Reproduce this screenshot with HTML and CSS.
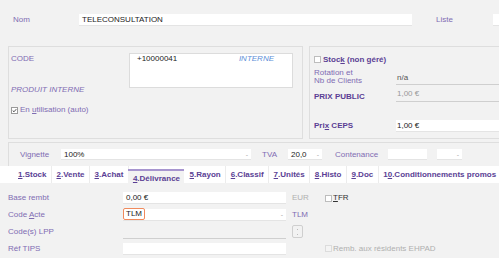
FILE: index.html
```html
<!DOCTYPE html>
<html lang="fr">
<head>
<meta charset="utf-8">
<title>Fiche produit</title>
<link rel="stylesheet" href="styles.css">
</head>
<body>
<div class="page">
  <div class="head-row">
    <span class="lbl nom-lbl">Nom</span>
    <div class="field white nom-input">TELECONSULTATION</div>
    <span class="lbl liste-lbl">Liste</span>
    <div class="field white liste-input"></div>
  </div>

  <div class="panels">
    <div class="panel left-panel">
      <div class="code-row">
        <div class="code-labels">
          <span class="lbl">CODE</span>
          <span class="lbl ital">PRODUIT INTERNE</span>
        </div>
        <div class="code-box">
          <span class="code-val">+10000041</span>
          <span class="interne">INTERNE</span>
        </div>
      </div>
      <div class="check-row">
        <span class="chk checked"><svg width="7" height="7" viewBox="0 0 7 7"><path d="M1 3.6 L2.8 5.3 L6 1.6" fill="none" stroke="#333" stroke-width="1.2"/></svg></span>
        <span class="lbl">En <u>u</u>tilisation (auto)</span>
      </div>
    </div>
    <div class="panel right-panel">
      <div class="check-row stock-row">
        <span class="chk"></span>
        <span class="lbl bold">Stoc<u>k</u> (non géré)</span>
      </div>
      <div class="rp-row rot-row">
        <span class="lbl rp-lbl two">Rotation et<br>Nb de Clients</span>
        <div class="field line na">n/a</div>
      </div>
      <div class="rp-row pp-row">
        <span class="lbl rp-lbl bold pp-lbl">PRIX PUBLIC</span>
        <div class="field line grey">1,00 €</div>
      </div>
      <div class="rp-row ceps-row">
        <span class="lbl rp-lbl bold">Pri<u>x</u> CEPS</span>
        <div class="field white ceps">1,00 €</div>
      </div>
    </div>
  </div>

  <div class="vig-box">
    <span class="lbl vig-lbl">Vi<u>g</u>nette</span>
    <div class="field white vig-input">100%<span class="arr">-</span></div>
    <span class="lbl tva-lbl">TVA</span>
    <div class="field white tva-input">20,0<span class="arr">-</span></div>
    <span class="lbl cont-lbl">Contenance</span>
    <div class="field white cont-input"></div>
    <div class="field white unit-input"><span class="arr">-</span></div>
  </div>

  <div class="tabs">
    <span class="tab"><u>1</u>.Stock</span>
    <span class="tab"><u>2</u>.Vente</span>
    <span class="tab"><u>3</u>.Achat</span>
    <span class="tab active"><u>4</u>.Délivrance</span>
    <span class="tab"><u>5</u>.Rayon</span>
    <span class="tab"><u>6</u>.Classif</span>
    <span class="tab"><u>7</u>.Unités</span>
    <span class="tab"><u>8</u>.Histo</span>
    <span class="tab"><u>9</u>.Doc</span>
    <span class="tab">1<u>0</u>.Conditionnements promos</span>
  </div>

  <div class="content">
    <div class="c-row">
      <span class="lbl c-lbl">Base rembt</span>
      <div class="field white c-input">0,00 €</div>
      <span class="unit grey-txt">EUR</span>
      <span class="check-row c-chk"><span class="chk"></span><span class="lbl dark"><u>T</u>FR</span></span>
    </div>
    <div class="c-row">
      <span class="lbl c-lbl">Code <u>A</u>cte</span>
      <div class="field white c-input"><span class="tlm">TLM</span><span class="arr">-</span></div>
      <span class="unit lbl">TLM</span>
    </div>
    <div class="c-row">
      <span class="lbl c-lbl">Code(s) LPP</span>
      <div class="field line c-input"></div>
      <span class="unit"><span class="mini-btn"><span class="dot"></span><span class="dot"></span></span></span>
    </div>
    <div class="c-row">
      <span class="lbl c-lbl">Réf TIPS</span>
      <div class="field white c-input"></div>
      <span class="unit"></span>
      <span class="check-row c-chk disabled"><span class="chk"></span><span class="lbl grey-txt">Remb. aux résidents EHPAD</span></span>
    </div>
  </div>
</div>
</body>
</html>
```
FILE: styles.css
```css
* { box-sizing: border-box; }
html, body {
  margin: 0;
  padding: 0;
  background: #f2f2f2;
  overflow: hidden;
}
body {
  font-family: "Liberation Sans", Arial, sans-serif;
  font-size: 8px;
  color: #222;
  line-height: 10px;
}
.page {
  width: 540px;
  height: 258px;
}
u { text-decoration: underline; text-underline-offset: 1px; }

.lbl { color: #7f6cb2; white-space: nowrap; }
.lbl.bold { color: #5a3e94; font-weight: bold; }
.lbl.ital { font-style: italic; }
.lbl.dark { color: #333; }
.grey-txt { color: #b0b0b0; }

.field {
  height: 11px;
  line-height: 11px;
  padding-left: 3px;
  color: #222;
  position: relative;
  white-space: nowrap;
}
.field.white { background: #fff; border-bottom: 1px solid #e4e4e4; }
.field.line { background: transparent; border-bottom: 1px solid #cfcfcf; }
.field.grey { color: #999; }
.arr {
  position: absolute;
  right: 3px;
  top: 0;
  color: #aaa;
  font-size: 7px;
}

/* header */
.head-row {
  display: flex;
  align-items: center;
  padding-top: 14px;
  height: 26px;
}
.nom-lbl { width: 79px; padding-left: 13px; }
.nom-input { width: 333px; height: 12px; line-height: 12px; }
.liste-lbl { margin-left: 24px; width: 57px; }
.liste-input { flex: 1; height: 12px; }

/* panels */
.panels {
  display: flex;
  gap: 6px;
  margin-top: 20px;
  padding-left: 8px;
}
.panel {
  border: 1px solid #dedede;
  height: 93px;
}
.left-panel {
  width: 295px;
  padding: 6px 9px 0 2px;
}
.code-row { display: flex; }
.code-labels {
  width: 118px;
  height: 42px;
  display: flex;
  flex-direction: column;
  justify-content: space-between;
  padding-top: 1px;
}
.code-box {
  flex: 1;
  height: 35px;
  background: #fff;
  border: 1px solid #dcdcdc;
  display: flex;
  justify-content: space-between;
  padding: 0 18px 0 7px;
}
.code-val { color: #222; }
.interne { color: #5d8fd8; font-style: italic; }
.check-row {
  display: flex;
  align-items: center;
  gap: 2px;
}
.left-panel .check-row { margin-top: 10px; }
.chk {
  width: 7px;
  height: 7px;
  background: #fff;
  border: 1px solid #bdbdbd;
  display: inline-flex;
  align-items: center;
  justify-content: center;
  flex: none;
}
.chk.checked { border-color: #9a9a9a; }
.chk svg { display: block; }

.right-panel {
  flex: 1;
  padding: 8px 0 0 4px;
}
.stock-row { height: 9px; }
.rp-row { display: flex; }
.rp-lbl { width: 82px; }
.rot-row { margin-top: 5px; align-items: flex-end; }
.rp-lbl.two { line-height: 8px; }
.na { flex: 1; height: 14px; line-height: 13px; padding-left: 1px; color: #555; }
.pp-row { margin-top: 4px; align-items: flex-end; }
.pp-lbl { padding-bottom: 0; }
.pp-row .field { flex: 1; height: 13px; line-height: 10px; padding-left: 1px; }
.ceps-row { margin-top: 18px; align-items: center; }
.ceps { flex: 1; height: 12px; line-height: 12px; padding-left: 1px; }

/* vignette row */
.vig-box {
  margin: 3px 0 0 8px;
  height: 24px;
  border: 1px solid #dedede;
  border-bottom: none;
  display: flex;
  align-items: center;
}
.vig-lbl { width: 52px; padding-left: 11px; }
.vig-input { width: 190px; height: 11px; }
.tva-lbl { margin-left: 11px; width: 26px; }
.tva-input { width: 34px; }
.cont-lbl { margin-left: 13px; width: 53px; }
.cont-input { width: 39px; }
.unit-input { width: 25px; margin-left: 10px; }

/* tabs */
.tabs {
  display: flex;
  height: 17px;
  background: #fff;
  padding-left: 13.5px;
}
.tab {
  color: #5a3e94;
  font-weight: bold;
  padding: 0 4.5px 0 4.5px;
  line-height: 17px;
  border-right: 1px solid #ececec;
  white-space: nowrap;
}
.tab.active {
  background: #f2f2f2;
  border-top: 2px solid #a795cf;
  line-height: 13px;
  margin-top: 3px;
  padding: 1px 4px 0 5px;
  height: 14px;
  margin-left: -1px;
  border-right: none;
  margin-right: 1px;
}

/* content */
.content {
  padding: 7px 0 0 8px;
}
.c-row {
  display: flex;
  align-items: center;
  height: 16.8px;
}
.c-lbl { width: 115px; }
.c-input { width: 163px; height: 12px; line-height: 12px; }
.field.line.c-input { height: 11px; margin-top: 4px; }
.unit { width: 39px; padding-left: 6px; }
.unit.lbl { padding-left: 6px; }
.tlm {
  display: inline-block;
  border: 1px solid #f08a5d;
  border-radius: 2px;
  height: 12px;
  line-height: 10px;
  padding: 0 2px;
  margin-left: -3px;
  margin-top: -1px;
  vertical-align: top;
}
.c-chk { gap: 1px; }
.disabled .chk { border-color: #dcdcdc; background: #f4f4f4; }
.mini-btn {
  display: inline-flex;
  flex-direction: column;
  align-items: center;
  justify-content: center;
  gap: 4px;
  width: 11px;
  height: 13px;
  border: 1px solid #cfcfcf;
  border-radius: 2px;
  vertical-align: middle;
}
.dot { width: 1px; height: 1px; background: #bbb; }
```
